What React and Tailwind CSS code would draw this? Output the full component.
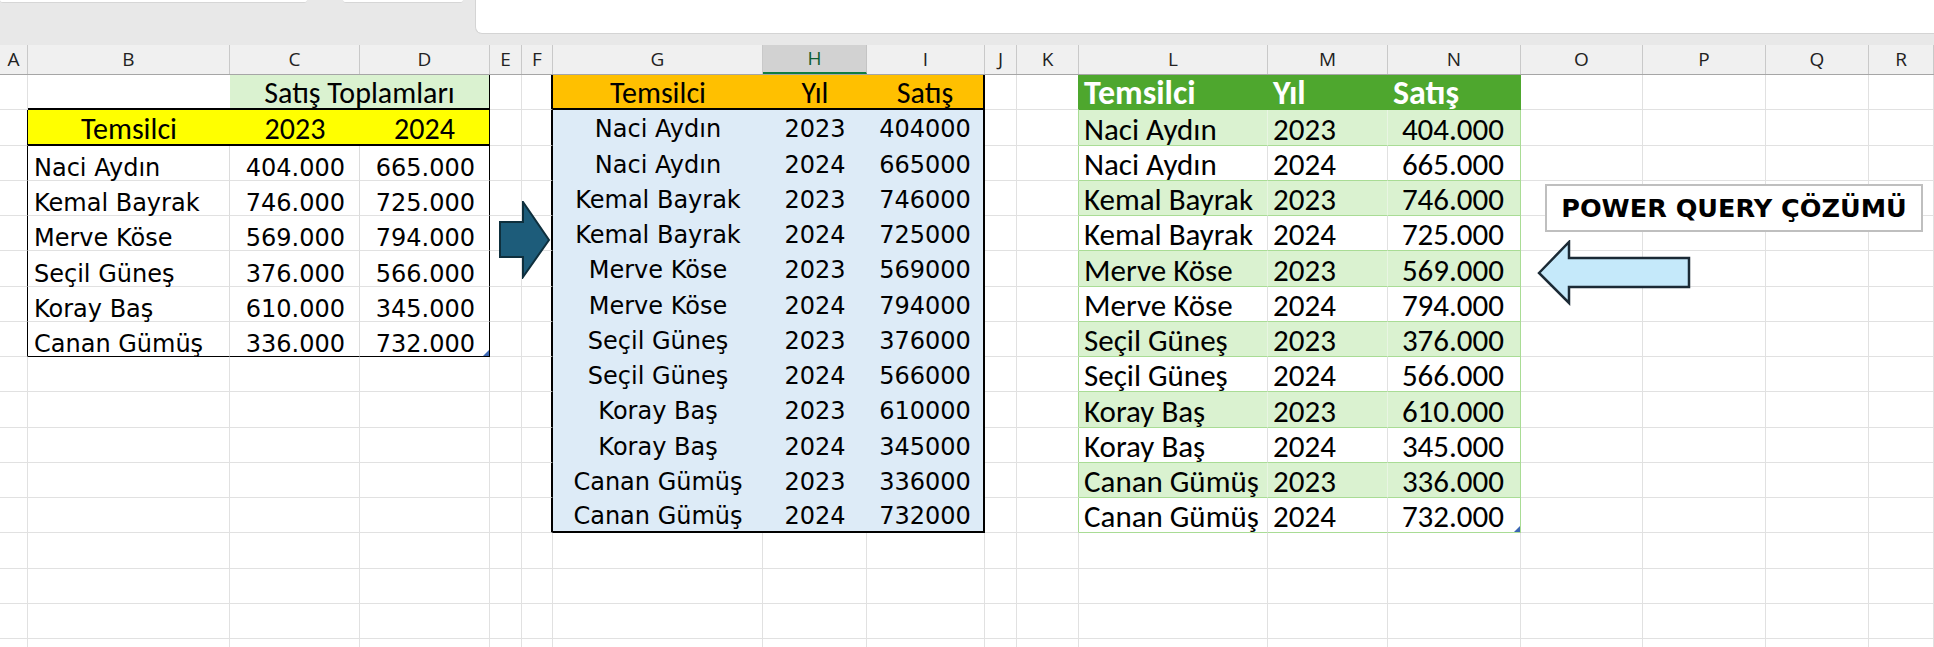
import React from "react";

const COLS = [
  ["A", "w-[28px]"],
  ["B", "w-[202px]"],
  ["C", "w-[130px]"],
  ["D", "w-[130px]"],
  ["E", "w-[32px]"],
  ["F", "w-[31px]"],
  ["G", "w-[210px]"],
  ["H", "w-[104px]"],
  ["I", "w-[118px]"],
  ["J", "w-[32px]"],
  ["K", "w-[62px]"],
  ["L", "w-[189px]"],
  ["M", "w-[120px]"],
  ["N", "w-[133px]"],
  ["O", "w-[122px]"],
  ["P", "w-[123px]"],
  ["Q", "w-[103px]"],
  ["R", "flex-1"],
];

const TAH = "font-['DejaVu_Sans',sans-serif] text-[24px] leading-none text-black";
const CAL = "font-['Carlito','Lato',sans-serif] text-[30px] leading-none text-black";
const CAL3 = "font-['Carlito','Lato',sans-serif] text-[31px] leading-none text-black";
const CAL3B = "font-['Carlito','Lato',sans-serif] text-[34px] leading-none font-bold text-white";

const DATA = [
  ["Naci Aydın", "404.000", "665.000"],
  ["Kemal Bayrak", "746.000", "725.000"],
  ["Merve Köse", "569.000", "794.000"],
  ["Seçil Güneş", "376.000", "566.000"],
  ["Koray Baş", "610.000", "345.000"],
  ["Canan Gümüş", "336.000", "732.000"],
];

const LONG = [];
DATA.forEach(([n, a, b]) => {
  LONG.push([n, "2023", a]);
  LONG.push([n, "2024", b]);
});

const GRID = "border-r border-b border-r-[#e1e1e1] border-b-[#e1e1e1] bg-white items-end";

function cellFor(r, c) {
  // ---- Table 1 ----
  if (c === "A" && r >= 2 && r <= 8) {
    return { cls: "border-r border-b border-r-black border-b-[#e1e1e1] bg-white" };
  }
  if (r === 1 && c === "B") {
    return { cls: "border-b-2 border-b-black bg-white" };
  }
  if (r === 1 && c === "C") {
    return {
      w: "w-[260px]",
      cls: "border-r border-b-2 border-r-black border-b-black bg-[#daf2d0] items-end justify-center " + CAL,
      content: "Satış Toplamları",
    };
  }
  if (r === 1 && c === "D") return null;
  if (r === 2 && (c === "B" || c === "C" || c === "D")) {
    const txt = c === "B" ? "Temsilci" : c === "C" ? "2023" : "2024";
    const rb = c === "D" ? "border-r border-r-black" : "";
    return {
      cls: `${rb} border-b-2 border-b-black bg-[#ffff00] items-end justify-center ${CAL}`,
      content: txt,
    };
  }
  if (r >= 3 && r <= 8 && (c === "B" || c === "C" || c === "D")) {
    const d = DATA[r - 3];
    const bb = r === 8 ? "border-b-black" : "border-b-[#e1e1e1]";
    const rb = c === "D" ? "border-r-black" : "border-r-[#dcdcdc]";
    if (c === "B") {
      return { cls: `border-r border-b ${rb} ${bb} bg-white items-end pl-[6px] ${TAH}`, content: d[0] };
    }
    return {
      cls: `border-r border-b ${rb} ${bb} bg-white items-end justify-end pr-[14px] ${TAH} relative`,
      content: d[c === "C" ? 1 : 2],
      marker: r === 8 && c === "D",
    };
  }
  // ---- Table 2 ----
  if (c === "F" && r >= 1 && r <= 13) {
    return { cls: "border-r-2 border-b border-r-black border-b-[#e1e1e1] bg-white" };
  }
  if (r === 1 && (c === "G" || c === "H" || c === "I")) {
    const txt = c === "G" ? "Temsilci" : c === "H" ? "Yıl" : "Satış";
    const rb = c === "I" ? "border-r-2 border-r-black" : "";
    return {
      cls: `${rb} border-b-2 border-b-black bg-[#ffc000] items-end justify-center ${CAL}`,
      content: txt,
    };
  }
  if (r >= 2 && r <= 13 && (c === "G" || c === "H" || c === "I")) {
    const d = LONG[r - 2];
    const rb = c === "I" ? "border-r-2 border-r-black" : "";
    const bb = r === 13 ? "border-b-2 border-b-black" : "";
    const val = c === "G" ? d[0] : c === "H" ? d[1] : d[2].replace(".", "");
    return {
      cls: `${rb} ${bb} bg-[#ddebf7] items-center pt-[3px] justify-center ${TAH}`,
      content: val,
    };
  }
  // ---- Table 3 ----
  if (c === "K" && r >= 1 && r <= 13) {
    const rc = r === 1 ? "border-r-[#4ea72e]" : "border-r-[#a9dc95]";
    return { cls: `border-r border-b ${rc} border-b-[#e1e1e1] bg-white` };
  }
  if (r === 1 && (c === "L" || c === "M" || c === "N")) {
    const txt = c === "L" ? "Temsilci" : c === "M" ? "Yıl" : "Satış";
    return {
      cls: `bg-[#4ea72e] items-end pl-[5px] ${CAL3B}`,
      content: txt,
    };
  }
  if (r >= 2 && r <= 13 && (c === "L" || c === "M" || c === "N")) {
    const d = LONG[r - 2];
    const band = r % 2 === 0;
    const bg = band ? "bg-[#daf2d0]" : "bg-white";
    const rb =
      c === "N" ? "border-r-[#a9dc95]" : band ? "border-r-[#e9f5e3]" : "border-r-[#e1e1e1]";
    if (c === "N") {
      return {
        cls: `border-r border-b ${rb} border-b-[#a9dc95] ${bg} items-end justify-end pr-[16px] relative ${CAL3}`,
        content: d[2],
        marker: r === 13,
      };
    }
    return {
      cls: `border-r border-b ${rb} border-b-[#a9dc95] ${bg} items-end pl-[5px] ${CAL3}`,
      content: c === "L" ? d[0] : d[1],
    };
  }
  return { cls: GRID };
}

function Marker() {
  return (
    <svg className="absolute right-0 bottom-0" width="6" height="6" viewBox="0 0 6 6">
      <polygon points="6,0 6,6 0,6" fill="#3b66b3" />
    </svg>
  );
}

function Row({ r }) {
  return (
    <div className="flex h-[35.25px] shrink-0">
      {COLS.map(([c, w]) => {
        const cell = cellFor(r, c);
        if (cell === null) return null;
        return (
          <div
            key={c}
            className={`${cell.w || w} shrink-0 h-full flex whitespace-nowrap overflow-visible ${cell.cls}`}
          >
            {cell.content}
            {cell.marker ? <Marker /> : null}
          </div>
        );
      })}
    </div>
  );
}

function ColHeaders() {
  return (
    <div className="flex h-[30px] shrink-0 bg-[#f0f0f0] border-b border-[#a6a6a6]">
      {COLS.map(([c, w]) => (
        <div
          key={c}
          className={
            c === "H"
              ? `${w} shrink-0 h-full flex items-center justify-center bg-[#d2d2d2] border-r border-[#c4c4c4] border-b-2 border-b-[#107c41] text-[#0f5c31] font-['Open_Sans',sans-serif] text-[19px]`
              : `${w} shrink-0 h-full flex items-center justify-center border-r border-[#c9c9c9] text-[#222] font-['Open_Sans',sans-serif] text-[19px]`
          }
        >
          {c}
        </div>
      ))}
    </div>
  );
}

function TopBand() {
  return (
    <div className="h-[45px] shrink-0 bg-[#e8e8e8] flex items-start">
      <div className="w-[307px] h-[3px] bg-white rounded-b-[3px] border-b border-[#d6d6d6]" />
      <div className="ml-[36px] w-[120px] h-[3px] bg-white rounded-b-[3px] border-b border-[#d6d6d6]" />
      <div className="ml-[12px] flex-1 h-[34px] bg-white rounded-bl-[7px] border-b border-l border-[#d4d4d4]" />
    </div>
  );
}

export default function App() {
  const rows = [];
  for (let r = 1; r <= 17; r++) rows.push(<Row key={r} r={r} />);
  return (
    <div className="relative w-[1934px] h-[647px] overflow-hidden bg-white flex flex-col">
      <TopBand />
      <ColHeaders />
      {rows}

      {/* Right arrow */}
      <svg className="absolute left-[499px] top-[201px]" width="52" height="78" viewBox="0 0 52 78">
        <polygon
          points="1,21 24,21 24,1 50,39 24,76 24,56 1,56"
          fill="#1d5c7a"
          stroke="#0e2f3d"
          strokeWidth="2"
          strokeLinejoin="miter"
        />
      </svg>

      {/* POWER QUERY box */}
      <div className="absolute left-[1545px] top-[184px] w-[378px] h-[48px] bg-white border-2 border-[#bfbfbf] flex items-center justify-center">
        <span className="font-['DejaVu_Sans',sans-serif] font-bold text-[25.5px] text-black whitespace-nowrap">
          POWER QUERY ÇÖZÜMÜ
        </span>
      </div>

      {/* Left arrow */}
      <svg className="absolute left-[1537px] top-[240px]" width="155" height="66" viewBox="0 0 155 66">
        <polygon
          points="2,33 32,2 32,18 152,18 152,47 32,47 32,63"
          fill="#c5e9fa"
          stroke="#1b2a35"
          strokeWidth="2.5"
          strokeLinejoin="miter"
        />
      </svg>
    </div>
  );
}
